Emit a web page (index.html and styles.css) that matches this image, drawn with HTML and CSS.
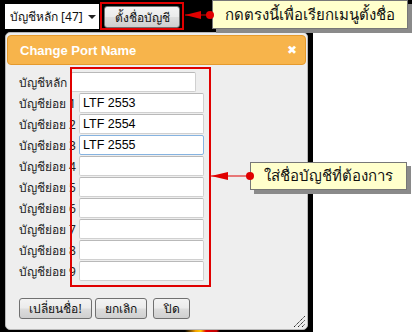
FILE: index.html
```html
<!DOCTYPE html>
<html lang="th">
<head>
<meta charset="utf-8">
<title>Change Port Name</title>
<link rel="stylesheet" href="styles.css">
</head>
<body>
<div class="page">
  <div class="topbar">
    <div class="select"><span class="select-text">บัญชีหลัก [47]</span><span class="caret"></span></div>
    <div class="mark-btn"><button class="btn top-btn">ตั้งชื่อบัญชี</button></div>
  </div>
  <div class="main">
    <div class="stage">
      <div class="dialog">
        <div class="dlg-head">
          <span class="dlg-title">Change Port Name</span>
          <span class="dlg-close">✖</span>
        </div>
        <div class="form">
          <div class="row"><span class="lbl lbl-main">บัญชีหลัก</span><span class="inp"></span></div>
          <div class="row"><span class="lbl lbl-sub">บัญชีย่อย 1</span><span class="inp">LTF 2553</span></div>
          <div class="row"><span class="lbl lbl-sub">บัญชีย่อย 2</span><span class="inp">LTF 2554</span></div>
          <div class="row"><span class="lbl lbl-sub">บัญชีย่อย 3</span><span class="inp focus">LTF 2555</span></div>
          <div class="row"><span class="lbl lbl-sub">บัญชีย่อย 4</span><span class="inp"></span></div>
          <div class="row"><span class="lbl lbl-sub">บัญชีย่อย 5</span><span class="inp"></span></div>
          <div class="row"><span class="lbl lbl-sub">บัญชีย่อย 6</span><span class="inp"></span></div>
          <div class="row"><span class="lbl lbl-sub">บัญชีย่อย 7</span><span class="inp"></span></div>
          <div class="row"><span class="lbl lbl-sub">บัญชีย่อย 8</span><span class="inp"></span></div>
          <div class="row"><span class="lbl lbl-sub">บัญชีย่อย 9</span><span class="inp"></span></div>
        </div>
        <div class="actions">
          <button class="btn b-rename">เปลี่ยนชื่อ!</button>
          <button class="btn b-cancel">ยกเลิก</button>
          <button class="btn b-close">ปิด</button>
        </div>
        <svg class="grip" width="13" height="13" viewBox="0 0 13 13">
          <path d="M1 12 L12 1 M5 12 L12 5 M9 12 L12 9" stroke="#222" stroke-width="1" fill="none" stroke-dasharray="1.4 0.6"/>
        </svg>
      </div>
      <div class="mark-box"></div>
      <div class="flame"></div>
    </div>
    <div class="rest"></div>
  </div>

  <svg class="arrow arrow1" width="30" height="12" viewBox="0 0 30 12">
    <polygon points="1,6 17,2 17,10" fill="#e00000"/>
    <line x1="1" y1="6" x2="26" y2="6" stroke="#e00000" stroke-width="1"/>
    <circle cx="26" cy="6" r="4" fill="#e00000"/>
  </svg>
  <div class="note note1">กดตรงนี้เพื่อเรียกเมนูตั้งชื่อ</div>

  <svg class="arrow arrow2" width="46" height="12" viewBox="0 0 46 12">
    <polygon points="1,6 18,2 18,10" fill="#e00000"/>
    <line x1="1" y1="6" x2="40" y2="6" stroke="#e00000" stroke-width="1"/>
    <circle cx="40" cy="6" r="4" fill="#e00000"/>
  </svg>
  <div class="note note2">ใส่ชื่อบัญชีที่ต้องการ</div>
</div>
</body>
</html>
```

FILE: styles.css
```css
* { box-sizing: border-box; }
html, body { margin: 0; padding: 0; }
body {
  background: #ffffff;
  font-family: Tahoma, "Noto Sans", "Liberation Sans", sans-serif;
  font-size: 12px;
  color: #222;
  width: 412px;
  height: 332px;
  overflow: hidden;
}
.page { position: relative; width: 412px; height: 332px; }

.topbar {
  height: 31px;
  background: #000;
  display: flex;
  align-items: flex-start;
  padding-left: 5px;
}
.select {
  margin-top: 4px;
  width: 94px;
  height: 25px;
  background: #fff;
  display: flex;
  align-items: center;
  padding-left: 5px;
  font-size: 12px;
  color: #111;
}
.select-text { flex: 1; white-space: nowrap; }
.caret {
  width: 0; height: 0;
  border-left: 4px solid transparent;
  border-right: 4px solid transparent;
  border-top: 4px solid #222;
  margin-right: 3px;
}
.mark-btn {
  margin-left: 1px;
  margin-top: 2px;
  border: 2px solid #e00000;
  padding: 2px 2px 0 2px;
  height: 28px;
}
.btn {
  font-family: Tahoma, "Noto Sans", "Liberation Sans", sans-serif;
  font-size: 12px;
  color: #111;
  border: 1px solid #707070;
  border-radius: 3px;
  background: linear-gradient(#f3f3f3, #ebebeb 48%, #dddddd 52%, #cfcfcf);
  padding: 0;
  height: 22px;
  display: flex;
  align-items: center;
  justify-content: center;
}
.top-btn { width: 76px; }

.main { display: flex; height: 301px; }
.stage {
  position: relative;
  width: 313px;
  background: #000;
  padding: 1px 5px 0 5px;
}
.rest { flex: 1; background: #fff; }

.dialog {
  position: relative;
  width: 303px;
  height: 298px;
  background: #eeeeee;
  border: 1px solid #b8b8b8;
  border-radius: 5px;
  padding: 2px 1px 0 1px;
}
.dlg-head {
  height: 30px;
  background: #f7b44b;
  border: 1px solid #e59a2d;
  border-radius: 4px;
  display: flex;
  align-items: center;
  justify-content: space-between;
  padding: 0 8px 0 12px;
}
.dlg-title {
  font-family: "Liberation Sans", Arial, sans-serif;
  font-weight: bold;
  font-size: 13px;
  color: #fff;
}
.dlg-close {
  color: #fff;
  font-size: 12px;
  font-weight: bold;
  font-family: "DejaVu Sans", sans-serif;
}
.form {
  display: flex;
  flex-direction: column;
  gap: 1px;
  padding: 7px 0 0 12px;
}
.row { display: flex; align-items: center; height: 20px; }
.lbl { white-space: nowrap; overflow: visible; color: #222; font-size: 12px; }
.lbl-main { width: 52px; }
.lbl-sub { width: 60px; }
.inp {
  width: 125px;
  height: 20px;
  background: #fff;
  border: 1px solid #d0d0d0;
  border-top-color: #b9b9b9;
  border-radius: 2px;
  font-family: "Liberation Sans", Arial, sans-serif;
  font-size: 12.5px;
  color: #000;
  padding-left: 3px;
  display: flex;
  align-items: center;
  position: relative;
  z-index: 1;
}
.inp.focus { border-color: #86b3e0; }

.actions {
  display: flex;
  padding: 17px 0 0 12px;
}
.actions .btn { height: 21px; }
.b-rename { width: 73px; }
.b-cancel { width: 52px; margin-left: 3px; }
.b-close { width: 37px; margin-left: 6px; }

.grip { position: absolute; right: 1px; bottom: 1px; }

.mark-box {
  position: absolute;
  left: 70px;
  top: 36px;
  width: 141px;
  height: 220px;
  border: 2px solid #e00000;
  z-index: 3;
}
.flame {
  position: absolute;
  left: 185px;
  bottom: 0;
  width: 35px;
  height: 2px;
  background: linear-gradient(90deg, #000, #f5a000 30%, #ffd000 45%, #e00000 60%, #c00000 90%, #000);
}

.note {
  position: absolute;
  background: #ffffcc;
  border: 1px solid #777;
  box-shadow: 4px 4px 0 #8a8a8a;
  display: flex;
  align-items: center;
  justify-content: center;
  font-size: 15px;
  color: #111;
  z-index: 5;
  white-space: nowrap;
}
.note1 { left: 212px; top: 0; width: 196px; height: 29px; }
.note2 { left: 250px; top: 162px; width: 157px; height: 28px; }
.arrow { position: absolute; z-index: 6; }
.arrow1 { left: 184px; top: 9px; }
.arrow2 { left: 210px; top: 170px; }
```
